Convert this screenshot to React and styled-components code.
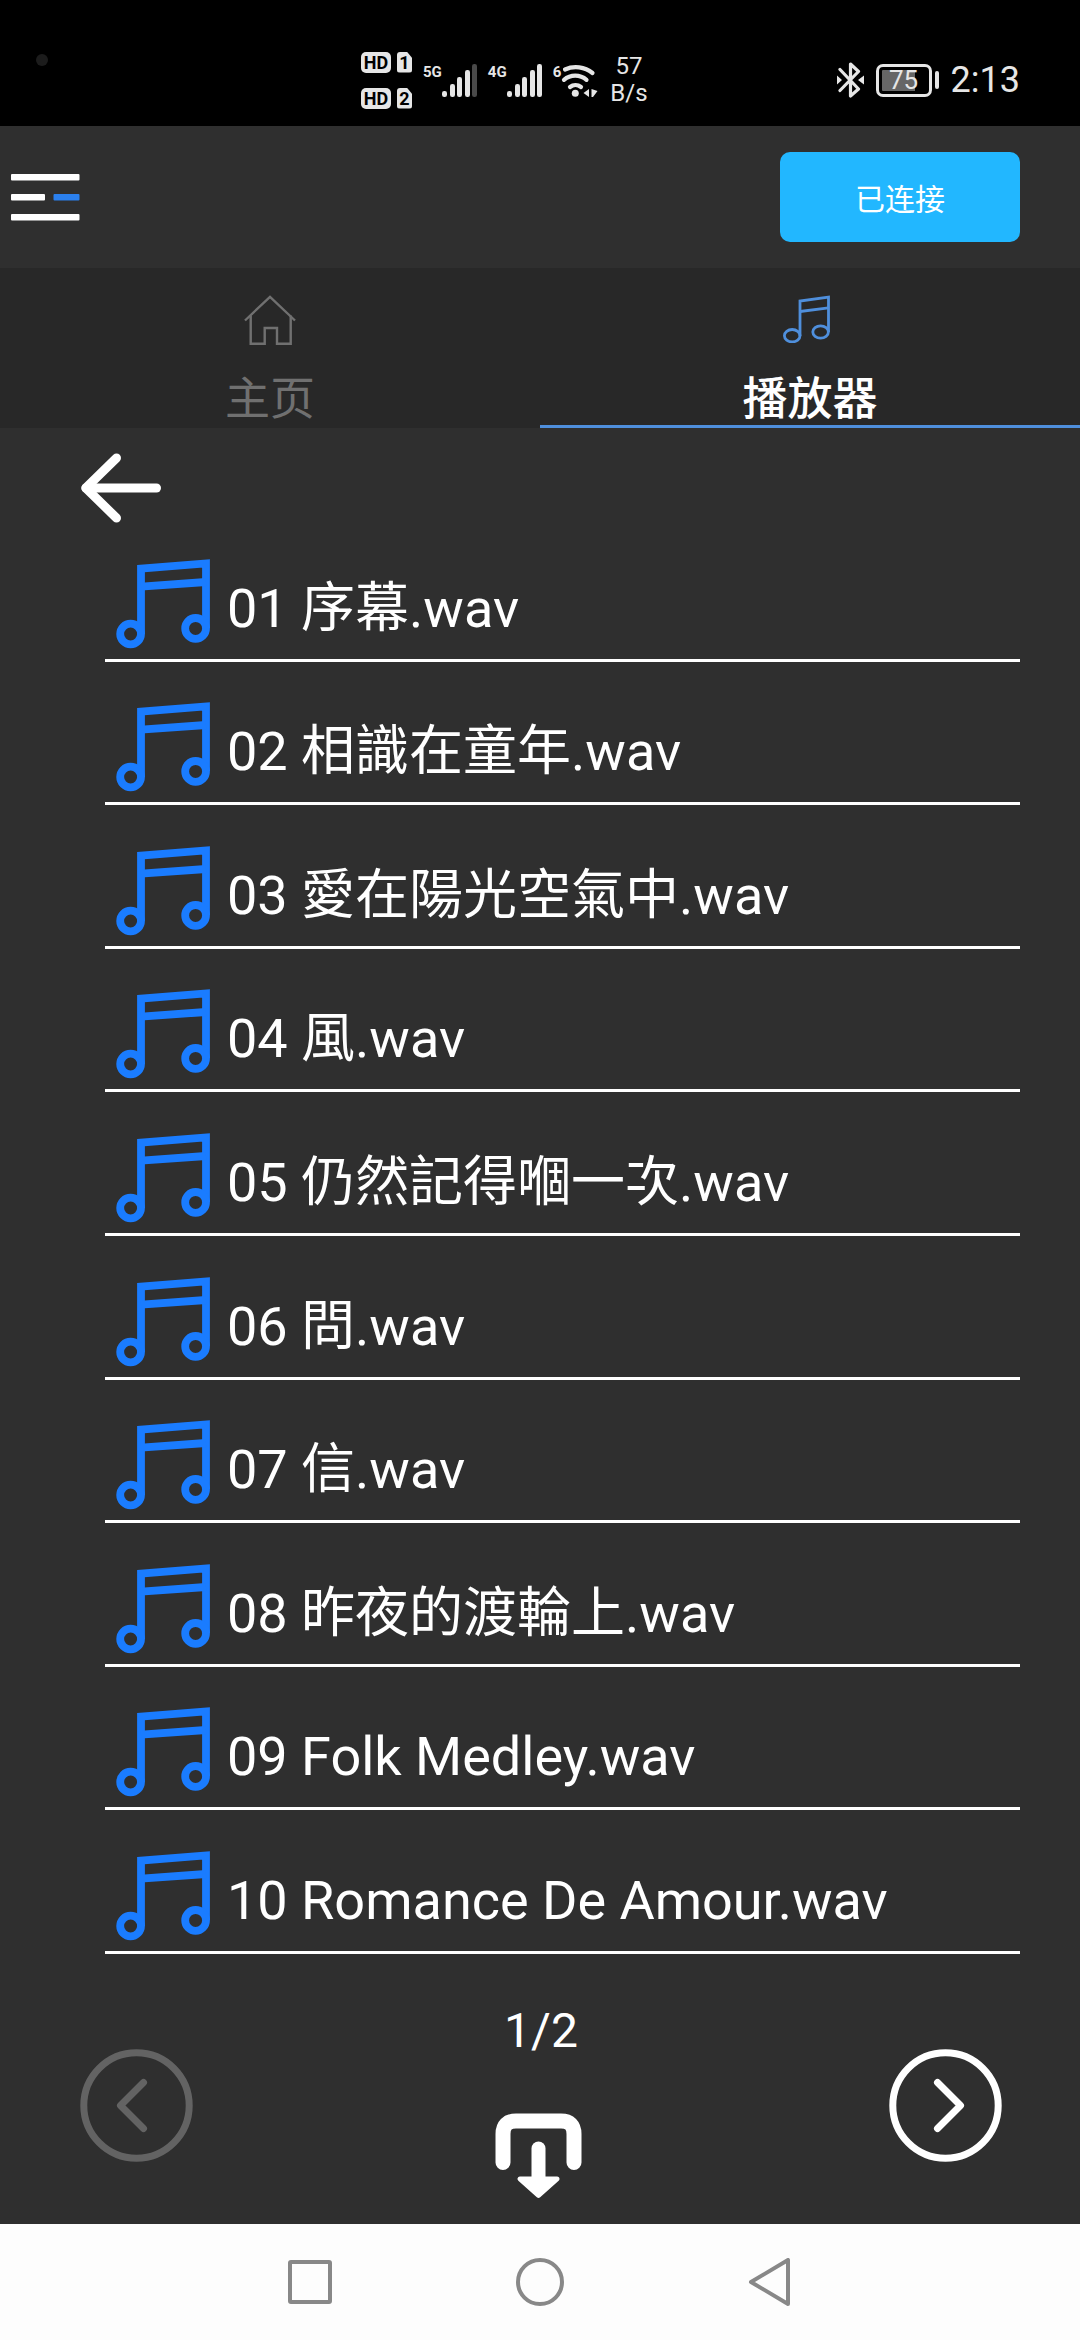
import React from 'react';
import styled, { createGlobalStyle, ThemeProvider, useTheme } from 'styled-components';

const theme = {
  backgroundColor: '#2f2f2f',
  tabColor: '#282828',
  color: '#ffffff',
  mutedColor: '#707070',
  disabledColor: '#636363',
  statusColor: '#e6e6e6',
  primaryColor: '#1a7cff',
  tabAccent: '#4f8fdc',
  buttonColor: '#22b7ff',
  navColor: '#888888',
};

const GlobalStyle = createGlobalStyle`
  * {
    box-sizing: border-box;
  }

  body {
    margin: 0;
    background-color: ${({ theme }) => theme.backgroundColor};
    color: ${({ theme }) => theme.color};
    font-family: Roboto, 'Noto Sans CJK SC', sans-serif;
  }

  button {
    padding: 0;
    border: none;
    background: none;
    color: inherit;
    font: inherit;
    cursor: pointer;
  }

  svg {
    display: block;
    flex: none;
  }
`;

const Page = styled.div`
  display: flex;
  flex-direction: column;
  min-height: 100vh;
`;

/* ---------- status bar ---------- */

const StatusBar = styled.div`
  position: relative;
  display: flex;
  justify-content: space-between;
  align-items: center;
  height: 126px;
  padding: 34px 60px 0 361px;
  background-color: #000;
  color: ${({ theme }) => theme.statusColor};
`;

const Camera = styled.span`
  position: absolute;
  left: 36px;
  top: 54px;
  width: 12px;
  height: 12px;
  border-radius: 50%;
  background-color: #1c1c1c;
`;

const StatusGroup = styled.div`
  display: flex;
  align-items: center;
  gap: ${({ $gap }) => $gap}px;
`;

const SimList = styled.div`
  display: flex;
  flex-direction: column;
  gap: 15px;
`;

const Sim = styled.div`
  display: flex;
  gap: 6px;
  font-size: 18px;
  font-weight: 700;
  line-height: 21px;
  text-align: center;
  color: #000;
`;

const HdBadge = styled.span`
  width: 30px;
  height: 21px;
  border-radius: 5px;
  background-color: ${({ theme }) => theme.statusColor};
`;

const SimBadge = styled.span`
  width: 15px;
  height: 21px;
  border-radius: 3px;
  background-color: ${({ theme }) => theme.statusColor};
  clip-path: polygon(0 0, 65% 0, 100% 30%, 100% 100%, 0 100%);
`;

const Signal = styled.div`
  display: flex;
  align-items: flex-start;
  font-size: 15px;
  font-weight: 700;
  line-height: 16px;
`;

const Speed = styled.div`
  font-size: 24px;
  line-height: 27px;
  text-align: center;
`;

const Battery = styled.div`
  display: flex;
  align-items: center;
  gap: 3px;

  &::after {
    content: '';
    width: 4px;
    height: 18px;
    border-radius: 2px;
    background-color: ${({ theme }) => theme.statusColor};
  }
`;

const BatteryLevel = styled.span`
  width: 56px;
  height: 33px;
  padding: 3px;
  border: 3px solid ${({ theme }) => theme.statusColor};
  border-radius: 7px;
  background: linear-gradient(90deg, #666 75%, transparent 75%) content-box;
  font-size: 26px;
  line-height: 21px;
  text-align: center;
`;

const Clock = styled.time`
  font-size: 36px;
  line-height: 40px;
`;

/* ---------- header and tabs ---------- */

const Header = styled.header`
  display: flex;
  justify-content: space-between;
  align-items: center;
  height: 142px;
  padding: 0 60px 0 11px;
`;

const ConnectButton = styled.button`
  width: 240px;
  height: 90px;
  border-radius: 10px;
  background-color: ${({ theme }) => theme.buttonColor};
  font-size: 30px;
`;

const Tabs = styled.nav`
  display: grid;
  grid-template-columns: 1fr 1fr;
  height: 160px;
  background-color: ${({ theme }) => theme.tabColor};
`;

const Tab = styled.a`
  display: flex;
  flex-direction: column;
  align-items: center;
  justify-content: space-between;
  padding-top: 27px;
  border-bottom: 3px solid ${({ $active, theme }) => ($active ? theme.tabAccent : 'transparent')};
  color: ${({ $active, theme }) => ($active ? theme.color : theme.mutedColor)};
  font-size: 45px;
  font-weight: ${({ $active }) => ($active ? 500 : 400)};
  line-height: 50px;
  text-decoration: none;
`;

/* ---------- track list ---------- */

const Main = styled.main`
  flex: 1;
  display: flex;
  flex-direction: column;
`;

const Toolbar = styled.div`
  height: 90px;
  padding: 25px 81px 0;
`;

const TrackList = styled.ul`
  flex: 1;
  display: grid;
  grid-auto-rows: 1fr;
  margin: 0 60px 0 105px;
  padding: 0;
  list-style: none;
`;

const TrackItem = styled.li`
  display: flex;
  border-bottom: 3px solid ${({ theme }) => theme.color};
`;

const TrackButton = styled.button`
  flex: 1;
  display: flex;
  align-items: flex-end;
  gap: 17px;
  padding: 40px 0 10px 11px;
  text-align: left;
`;

const TrackName = styled.span`
  padding-bottom: 8px;
  font-family: Roboto, 'Noto Sans CJK TC', sans-serif;
  font-size: 54px;
  line-height: 64px;
`;

/* ---------- pager ---------- */

const Pager = styled.footer`
  display: flex;
  justify-content: space-between;
  align-items: flex-start;
  height: 270px;
  padding: 0 78px 0 80px;
`;

const PageButton = styled.button`
  margin-top: 95px;
  color: ${({ theme }) => theme.color};

  &:disabled {
    color: ${({ theme }) => theme.disabledColor};
  }
`;

const PagerCenter = styled.div`
  display: flex;
  flex-direction: column;
  align-items: center;
  gap: 54px;
  padding-top: 49px;
`;

const PageCount = styled.span`
  font-size: 48px;
  line-height: 56px;
`;

const SystemNav = styled.nav`
  display: flex;
  justify-content: center;
  align-items: center;
  gap: 182px;
  height: 116px;
  background-color: #fdfdfd;
`;

/* ---------- icons ---------- */

const BARS = [
  { x: 0, y: 27 },
  { x: 8, y: 20 },
  { x: 15, y: 13 },
  { x: 23, y: 6 },
  { x: 30, y: 0 },
];

const SignalBars = ({ level }) => (
  <svg width="35" height="33" viewBox="0 0 35 33">
    {BARS.map(({ x, y }, i) => (
      <rect key={x} x={x} y={y} width="5" height={33 - y} rx="2.2" fill={i < level ? '#e6e6e6' : '#4a4a4a'} />
    ))}
  </svg>
);

const WifiIcon = () => (
  <svg width="38" height="33" viewBox="0 0 38 33" fill="none" stroke="currentColor" strokeWidth="4.2" strokeLinecap="round">
    <path d="M4 5.5A27 27 0 0 1 31.5 9" />
    <path d="M3 15.8A17.5 17.5 0 0 1 25.5 15.8" />
    <path d="M9 23A9 9 0 0 1 20 23" />
    <circle cx="14.3" cy="29.3" r="3.5" fill="currentColor" stroke="none" />
    <path d="M28 25v8l-5.5-4zM30.5 25l6 2-4.5 6h-1.5z" fill="currentColor" stroke="none" />
  </svg>
);

const BluetoothIcon = () => (
  <svg width="27" height="36" viewBox="0 0 27 36" fill="none" stroke="currentColor" strokeWidth="3.2" strokeLinecap="round" strokeLinejoin="round">
    <path d="M3 7.5L21.5 27 13.5 34V2L21.5 9.5 3 28.5" />
    <path d="M0 13.5l5 4.500-5 4.500zM27 13.500l-6 4.500 6 4.500z" fill="currentColor" stroke="none" />
  </svg>
);

const MenuIcon = () => {
  const theme = useTheme();

  return (
    <svg width="69" height="48" viewBox="0 0 69 48" fill={theme.color}>
      <rect y="1" width="68.5" height="6.5" rx="1" />
      <rect y="21" width="34" height="6.5" rx="1" />
      <rect x="42.5" y="21" width="26" height="6.5" rx="1" fill="#2b80ee" />
      <rect y="41" width="68.5" height="6.5" rx="1" />
    </svg>
  );
};

const HomeIcon = () => (
  <svg width="52" height="51" viewBox="0 0 52 51" fill="none" stroke="currentColor" strokeWidth="2.4">
    <path d="M1 25.5L26 1.8 51 25.5" />
    <path d="M6.7 20.5V48.7H20.7V33H33V48.7H46.7V20.5" />
  </svg>
);

const PlayerIcon = () => {
  const theme = useTheme();

  return (
    <svg width="54" height="48" viewBox="0 0 54 48" fill="none" stroke={theme.tabAccent} strokeWidth="2.8">
      <path d="M17 41V6L45.5 2V37" />
      <path d="M17 16.5L45.5 12.8" />
      <ellipse cx="9.2" cy="40.7" rx="7.8" ry="6.2" />
      <ellipse cx="37.6" cy="37" rx="7.8" ry="6.2" />
    </svg>
  );
};

const TrackIcon = () => {
  const theme = useTheme();

  return (
    <svg width="94" height="90" viewBox="0 0 94 90" fill="none" stroke={theme.primaryColor} strokeWidth="7.8">
      <path d="M25 75V9.6L90 4.4V69" />
      <path d="M25 27.7L90 23" />
      <circle cx="14.6" cy="75" r="10.4" />
      <circle cx="79.6" cy="69.4" r="10.4" />
    </svg>
  );
};

const BackIcon = () => (
  <svg width="80" height="70" viewBox="0 0 80 70" fill="none" stroke="currentColor" strokeWidth="9" strokeLinecap="round" strokeLinejoin="round">
    <path d="M35.5 5L4.8 35 35.5 65" />
    <path d="M5 35H75.5" />
  </svg>
);

const ChevronIcon = ({ d }) => (
  <svg width="113" height="113" viewBox="0 0 113 113" fill="none" stroke="currentColor" strokeWidth="7" strokeLinecap="round" strokeLinejoin="round">
    <circle cx="56.5" cy="56.5" r="52.7" />
    <path d={d} />
  </svg>
);

const LoadIcon = () => (
  <svg width="92" height="86" viewBox="0 0 92 86" fill="none" stroke="currentColor" strokeWidth="15" strokeLinecap="round">
    <path d="M8 49.5V21Q8 8 21 8H66Q79 8 79 21V49.5" />
    <path d="M43.5 35.5V66" strokeWidth="14" />
    <path d="M25 66H62L43.5 82.5z" fill="currentColor" strokeWidth="5" strokeLinejoin="round" />
  </svg>
);

const NavIcon = ({ children }) => {
  const theme = useTheme();

  return (
    <svg width="48" height="48" viewBox="0 0 48 48" fill="none" stroke={theme.navColor} strokeWidth="4" strokeLinejoin="round">
      {children}
    </svg>
  );
};

const tracks = [
  '01 序幕.wav',
  '02 相識在童年.wav',
  '03 愛在陽光空氣中.wav',
  '04 風.wav',
  '05 仍然記得嗰一次.wav',
  '06 問.wav',
  '07 信.wav',
  '08 昨夜的渡輪上.wav',
  '09 Folk Medley.wav',
  '10 Romance De Amour.wav',
];

function App() {
  return (
    <ThemeProvider theme={theme}>
      <GlobalStyle />
      <Page>
        <StatusBar>
          <Camera />
          <StatusGroup $gap={11}>
            <SimList>
              {[1, 2].map((slot) => (
                <Sim key={slot}>
                  <HdBadge>HD</HdBadge>
                  <SimBadge>{slot}</SimBadge>
                </Sim>
              ))}
            </SimList>
            <Signal>
              5G
              <SignalBars level={4} />
            </Signal>
            <Signal>
              4G
              <SignalBars level={5} />
            </Signal>
            <Signal>
              6
              <WifiIcon />
            </Signal>
            <Speed>
              57
              <br />
              B/s
            </Speed>
          </StatusGroup>
          <StatusGroup $gap={12}>
            <BluetoothIcon />
            <Battery>
              <BatteryLevel>75</BatteryLevel>
            </Battery>
            <Clock>2:13</Clock>
          </StatusGroup>
        </StatusBar>

        <Header>
          <button type="button" aria-label="菜单">
            <MenuIcon />
          </button>
          <ConnectButton type="button">已连接</ConnectButton>
        </Header>

        <Tabs>
          <Tab href="#home">
            <HomeIcon />
            主页
          </Tab>
          <Tab href="#player" $active aria-current="page">
            <PlayerIcon />
            播放器
          </Tab>
        </Tabs>

        <Main>
          <Toolbar>
            <button type="button" aria-label="返回">
              <BackIcon />
            </button>
          </Toolbar>
          <TrackList>
            {tracks.map((track) => (
              <TrackItem key={track}>
                <TrackButton type="button">
                  <TrackIcon />
                  <TrackName>{track}</TrackName>
                </TrackButton>
              </TrackItem>
            ))}
          </TrackList>
          <Pager>
            <PageButton type="button" aria-label="上一页" disabled>
              <ChevronIcon d="M63.5 33.5L40.5 56.5 63.5 79.5" />
            </PageButton>
            <PagerCenter>
              <PageCount>1/2</PageCount>
              <button type="button" aria-label="载入">
                <LoadIcon />
              </button>
            </PagerCenter>
            <PageButton type="button" aria-label="下一页">
              <ChevronIcon d="M48.5 33.5L71.5 56.5 48.5 79.5" />
            </PageButton>
          </Pager>
        </Main>

        <SystemNav>
          <button type="button" aria-label="最近任务">
            <NavIcon>
              <rect x="4" y="4" width="40" height="40" rx="1" />
            </NavIcon>
          </button>
          <button type="button" aria-label="主屏幕">
            <NavIcon>
              <circle cx="24" cy="24" r="22" />
            </NavIcon>
          </button>
          <button type="button" aria-label="后退">
            <NavIcon>
              <path d="M42 2V46L5 24z" />
            </NavIcon>
          </button>
        </SystemNav>
      </Page>
    </ThemeProvider>
  );
}

export default App;
